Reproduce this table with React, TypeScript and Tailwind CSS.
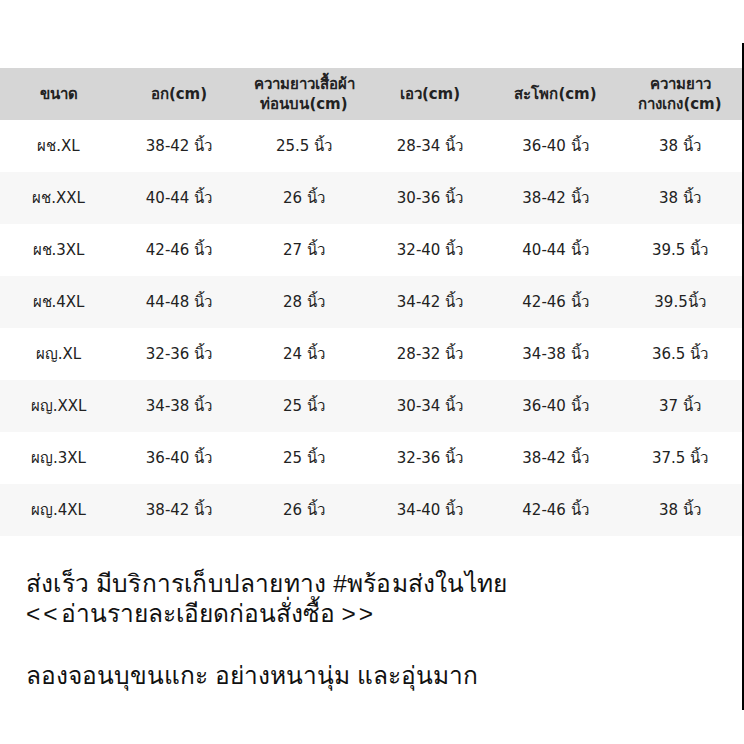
const headers = [
  ["ขนาด"],
  ["อก(cm)"],
  ["ความยาวเสื้อผ้า", "ท่อนบน(cm)"],
  ["เอว(cm)"],
  ["สะโพก(cm)"],
  ["ความยาว", "กางเกง(cm)"],
];

const rows = [
  ["ผช.XL", "38-42 นิ้ว", "25.5 นิ้ว", "28-34 นิ้ว", "36-40 นิ้ว", "38 นิ้ว"],
  ["ผช.XXL", "40-44 นิ้ว", "26 นิ้ว", "30-36 นิ้ว", "38-42 นิ้ว", "38 นิ้ว"],
  ["ผช.3XL", "42-46 นิ้ว", "27 นิ้ว", "32-40 นิ้ว", "40-44 นิ้ว", "39.5 นิ้ว"],
  ["ผช.4XL", "44-48 นิ้ว", "28 นิ้ว", "34-42 นิ้ว", "42-46 นิ้ว", "39.5นิ้ว"],
  ["ผญ.XL", "32-36 นิ้ว", "24 นิ้ว", "28-32 นิ้ว", "34-38 นิ้ว", "36.5 นิ้ว"],
  ["ผญ.XXL", "34-38 นิ้ว", "25 นิ้ว", "30-34 นิ้ว", "36-40 นิ้ว", "37 นิ้ว"],
  ["ผญ.3XL", "36-40 นิ้ว", "25 นิ้ว", "32-36 นิ้ว", "38-42 นิ้ว", "37.5 นิ้ว"],
  ["ผญ.4XL", "38-42 นิ้ว", "26 นิ้ว", "34-40 นิ้ว", "42-46 นิ้ว", "38 นิ้ว"],
];

const cols = "grid grid-cols-[117px_124px_126px_126px_125px_124px]";

export default function App() {
  return (
    <div className="w-[744px] h-[744px] bg-white pt-[43px]">
      <div className="h-[667px] w-[744px] border-r-2 border-black pt-[25px]">
        {/* TABLE */}
        <div
          className="w-[742px] text-[15px] text-[#222]"
          style={{ fontFamily: '"DejaVu Sans", "Noto Sans", sans-serif' }}
        >
          <div className={`${cols} h-[52px] bg-[#d6d6d6] font-bold`}>
            {headers.map((h, i) => (
              <div
                key={i}
                className="flex flex-col items-center justify-center text-center leading-[20px]"
              >
                {h.map((l) => (
                  <span key={l}>{l}</span>
                ))}
              </div>
            ))}
          </div>

          {rows.map((r, i) => (
            <div
              key={i}
              className={`${cols} h-[52px] ${i % 2 ? "bg-[#f7f7f7]" : "bg-white"}`}
            >
              {r.map((c, j) => (
                <div key={j} className="flex items-center justify-center">
                  {c}
                </div>
              ))}
            </div>
          ))}
        </div>

        {/* NOTES */}
        <div
          className="mt-[33px] pl-[26px] text-[24.5px] leading-[30px] text-[#111]"
          style={{ fontFamily: '"Liberation Sans", Arial, sans-serif' }}
        >
          <p className="tracking-[0.2px]">ส่งเร็ว มีบริการเก็บปลายทาง #พร้อมส่งในไทย</p>
          <p>
            <span className="tracking-[3px]">&lt;&lt;</span>อ่านรายละเอียดก่อนสั่งซื้อ{" "}
            <span className="tracking-[3px]">&gt;&gt;</span>
          </p>
          <p className="mt-[32px]">ลองจอนบุขนแกะ อย่างหนานุ่ม และอุ่นมาก</p>
        </div>
      </div>
    </div>
  );
}
